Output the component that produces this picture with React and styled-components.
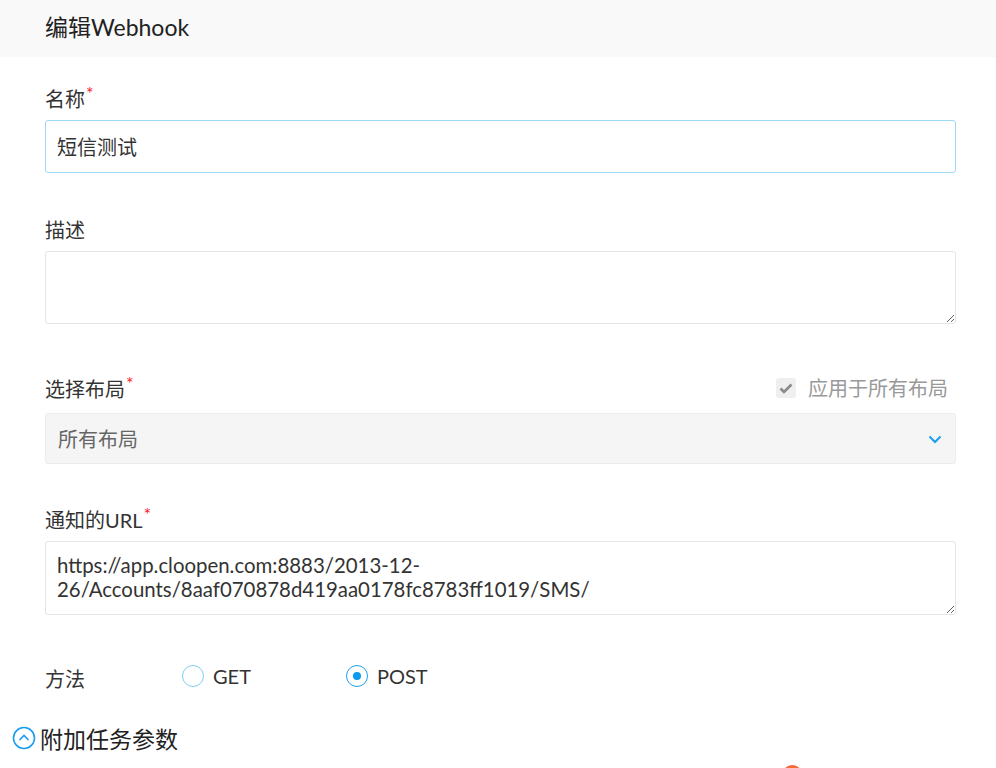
import React from 'react';
import styled, { createGlobalStyle } from 'styled-components';

const GlobalStyle = createGlobalStyle`
  html, body {
    margin: 0;
    padding: 0;
    background: #fff;
    font-family: Lato, "Noto Sans CJK SC", sans-serif;
    color: #333;
    overflow: hidden;
  }
`;

const Page = styled.div`
  width: 996px;
  height: 768px;
  position: relative;
  overflow: hidden;
`;

const Header = styled.div`
  box-sizing: border-box;
  height: 57px;
  background: #f9f9f9;
  padding: 12px 0 0 45px;
  font-size: 23px;
  line-height: 30px;
  color: #222;
`;

const Body = styled.div`
  padding: 30px 40px 0 45px;
`;

const Field = styled.div`
  margin-bottom: ${(p) => p.$gap || 45}px;
`;

const LabelRow = styled.div`
  display: flex;
  justify-content: space-between;
  align-items: center;
  height: 24px;
  margin-bottom: ${(p) => p.$mb || 9}px;
`;

const Label = styled.label`
  font-size: 20px;
  line-height: 24px;
  color: #333;
`;

const Star = styled.span`
  color: #f5222d;
  font-size: 18px;
  line-height: 1;
  vertical-align: top;
  position: relative;
  top: -3px;
  margin-left: 1px;
`;

const Input = styled.input`
  display: block;
  box-sizing: border-box;
  width: 100%;
  height: 53px;
  padding: 0 11px;
  border: 1px solid ${(p) => (p.$focus ? '#9bd9f5' : '#e5e5e5')};
  border-radius: 3px;
  font: inherit;
  font-size: 20px;
  color: #333;
  outline: none;
`;

const TextArea = styled.textarea`
  display: block;
  box-sizing: border-box;
  width: 100%;
  height: ${(p) => p.$h || 73}px;
  padding: 11px 11px;
  border: 1px solid #e5e5e5;
  border-radius: 3px;
  font: inherit;
  font-size: 20.4px;
  line-height: 24px;
  color: #333;
  outline: none;
  resize: vertical;
`;

const Check = styled.div`
  display: flex;
  align-items: center;
  gap: 12px;
  color: #999;
  font-size: 20px;
  margin-right: 8px;
  position: relative;
  top: -2px;
`;

const CheckBox = styled.span`
  width: 20px;
  height: 20px;
  border-radius: 3px;
  background: #efefef;
  display: inline-flex;
  align-items: center;
  justify-content: center;
  position: relative;
  top: 1px;
`;

const Select = styled.div`
  box-sizing: border-box;
  height: 51px;
  background: #f5f5f5;
  border: 1px solid #ececec;
  border-radius: 3px;
  display: flex;
  align-items: center;
  justify-content: space-between;
  padding: 0 12px;
  font-size: 20px;
  color: #666;
`;

const MethodRow = styled.div`
  display: flex;
  align-items: center;
  height: 24px;
  margin-top: -5px;
  margin-bottom: 33px;
`;

const MethodLabel = styled.span`
  width: 137px;
  font-size: 20px;
  color: #333;
  position: relative;
  top: 2px;
`;

const Radio = styled.label`
  width: 164px;
  display: flex;
  align-items: center;
  gap: 9px;
  font-size: 20px;
  color: #333;
`;

const RadioCircle = styled.span`
  box-sizing: border-box;
  width: 22px;
  height: 22px;
  border-radius: 50%;
  border: 1px solid ${(p) => (p.$on ? '#1aa3ef' : '#7fcdf5')};
  display: inline-flex;
  align-items: center;
  justify-content: center;
  &::after {
    content: '';
    width: 8px;
    height: 8px;
    border-radius: 50%;
    background: ${(p) => (p.$on ? '#0a9af0' : 'transparent')};
  }
`;

const Extra = styled.div`
  margin-left: -33px;
  display: flex;
  align-items: center;
  gap: 4px;
  font-size: 23px;
  color: #222;
`;

const Orange = styled.div`
  position: absolute;
  left: 783px;
  top: 765px;
  width: 18px;
  height: 16px;
  border-radius: 60% 90% 0 0;
  transform: skewY(-10deg);
  background: #f26b3a;
`;

export default function App() {
  return (
    <Page>
      <GlobalStyle />
      <Header>编辑Webhook</Header>
      <Body>
        <Field>
          <LabelRow>
            <Label>名称<Star>*</Star></Label>
          </LabelRow>
          <Input $focus defaultValue="短信测试" />
        </Field>
        <Field $gap={53}>
          <LabelRow>
            <Label>描述</Label>
          </LabelRow>
          <TextArea />
        </Field>
        <Field $gap={44}>
          <LabelRow $mb={12}>
            <Label>选择布局<Star>*</Star></Label>
            <Check>
              <CheckBox>
                <svg width="16" height="16" viewBox="0 0 16 16">
                  <path d="M2.5 8.5 L6 12 L13.5 4.5" fill="none" stroke="#8a8a8a" strokeWidth="2.6" />
                </svg>
              </CheckBox>
              应用于所有布局
            </Check>
          </LabelRow>
          <Select>
            所有布局
            <svg width="16" height="16" viewBox="0 0 16 16">
              <path d="M2.5 5.5 L8 11 L13.5 5.5" fill="none" stroke="#1a9ef0" strokeWidth="2" />
            </svg>
          </Select>
        </Field>
        <Field $gap={54}>
          <LabelRow>
            <Label>通知的URL<Star>*</Star></Label>
          </LabelRow>
          <TextArea
            $h={74}
            defaultValue="https://app.cloopen.com:8883/2013-12-26/Accounts/8aaf070878d419aa0178fc8783ff1019/SMS/"
          />
        </Field>
        <MethodRow>
          <MethodLabel>方法</MethodLabel>
          <Radio>
            <RadioCircle />
            GET
          </Radio>
          <Radio>
            <RadioCircle $on />
            POST
          </Radio>
        </MethodRow>
        <Extra>
          <svg width="24" height="24" viewBox="0 0 24 24">
            <circle cx="12" cy="12" r="10.5" fill="none" stroke="#1a9ef0" strokeWidth="1.6" />
            <path d="M7.5 14 L12 9.5 L16.5 14" fill="none" stroke="#1a9ef0" strokeWidth="1.6" />
          </svg>
          附加任务参数
        </Extra>
      </Body>
      <Orange />
    </Page>
  );
}
